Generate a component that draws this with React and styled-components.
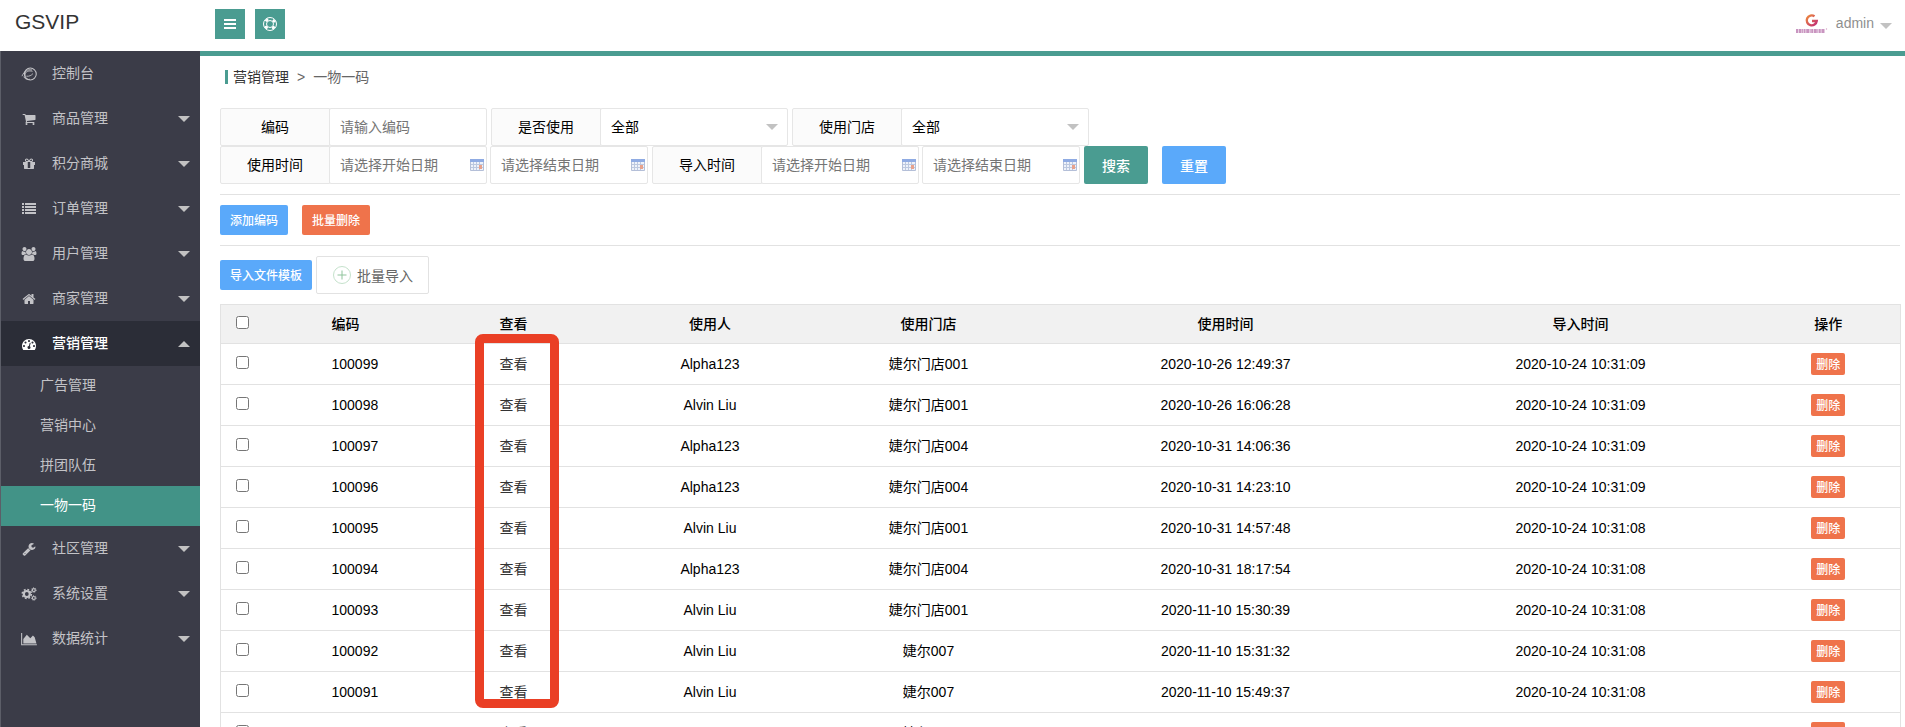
import React, { useState } from 'react';
import styled, { createGlobalStyle, css } from 'styled-components';

const GlobalStyle = createGlobalStyle`
  * {
    box-sizing: border-box;
  }

  body {
    margin: 0;
    background: #fff;
    color: #000;
    font-family: 'Liberation Sans', 'Noto Sans CJK SC', sans-serif;
    font-size: 14px;
    line-height: 24px;
  }

  button, input, select {
    font-family: inherit;
    font-size: 14px;
  }

  a {
    color: #333;
    text-decoration: none;
  }
`;

const Page = styled.div`
  display: grid;
  grid-template-columns: 200px minmax(0, 1fr);
  grid-template-rows: 51px minmax(0, 1fr);
  height: 100vh;
  overflow: hidden;
`;

const Brand = styled.div`
  padding: 10px 15px;
  color: #333;
  font-size: 21px;
`;

const Header = styled.header`
  display: flex;
  justify-content: space-between;
  padding: 9px 13px 0 15px;
`;

const Tools = styled.div`
  display: flex;
  gap: 10px;
`;

const ToolButton = styled.button`
  display: flex;
  align-items: center;
  justify-content: center;
  width: 30px;
  height: 30px;
  padding: 0;
  border: 0;
  background: #4a9c91;
  color: #fff;
  cursor: pointer;
`;

const User = styled.a`
  display: flex;
  align-items: center;
  height: 28px;
  color: #8f8f8f;

  span {
    margin: 0 6px 0 8px;
  }
`;

const Caret = styled.i`
  flex: none;
  border: 6px solid transparent;
  border-top-color: #c2c2c2;
  border-bottom-width: 0;

  ${({ $up }) => $up && css`
    border-top-width: 0;
    border-bottom: 6px solid #c2c2c2;
  `}
`;

const UserCaret = styled(Caret)`
  margin-top: 6px;
`;

const Sidebar = styled.nav`
  border-left: 1px solid #5c5e68;
  background: #3b3c48;
`;

const MenuItem = styled.a`
  display: flex;
  align-items: center;
  height: 45px;
  padding: 0 10px 0 19px;
  background: ${({ $active }) => ($active ? '#2b2d37' : 'transparent')};
  color: ${({ $active }) => ($active ? '#fff' : '#c3c3c7')};
  font-weight: ${({ $active }) => ($active ? 500 : 400)};

  svg {
    width: 18px;
    height: 14px;
  }

  span {
    flex: 1;
    padding: 0 0 2px 14px;
  }
`;

const SubItem = styled.a`
  display: block;
  height: 40px;
  padding-left: 39px;
  background: ${({ $active }) => ($active ? '#429387' : 'transparent')};
  color: ${({ $active }) => ($active ? '#fff' : '#c3c3c7')};
  line-height: 38px;
`;

const Content = styled.main`
  border-top: 5px solid #4a9c91;
  padding: 9px 5px 0 20px;
  overflow: hidden;
`;

const Breadcrumb = styled.div`
  display: flex;
  align-items: center;
  gap: 8px;
  height: 24px;
  margin: 0 0 19px 5px;
  color: #666;

  &::before {
    content: '';
    width: 3px;
    height: 14px;
    margin-right: -3px;
    background: #4a9c91;
  }
`;

const FilterRow = styled.div`
  display: flex;
  gap: 4px;
`;

const Group = styled.div`
  display: flex;
  gap: 3px;
`;

const Field = styled.div`
  display: flex;
`;

const FieldLabel = styled.label`
  width: 110px;
  height: 38px;
  border: 1px solid #e6e6e6;
  border-radius: 2px 0 0 2px;
  background: #fbfbfb;
  line-height: 36px;
  text-align: center;
`;

const control = css`
  height: 38px;
  border: 1px solid #e6e6e6;
  border-radius: 2px;
  padding: 0 10px;
  background: #fff;
  color: #000;
  outline: none;
`;

const Input = styled.input`
  ${control}
  width: 158px;

  ${FieldLabel} + & {
    margin-left: -1px;
  }

  &::placeholder {
    color: #757575;
  }
`;

const DateBox = styled.div`
  display: flex;
  align-items: center;
  width: 158px;
  padding-right: 1px;
  border: 1px solid #e6e6e6;
  border-radius: 2px;

  ${FieldLabel} + & {
    margin-left: -1px;
  }

  input {
    width: 100%;
    min-width: 0;
    height: 36px;
    padding: 0 10px;
    border: 0;
    background: none;
    outline: none;
  }

  input::placeholder {
    color: #757575;
  }

  svg {
    flex: none;
  }
`;

const SelectBox = styled.div`
  display: flex;
  align-items: center;
  width: 188px;
  margin-left: -1px;

  ${Caret} {
    margin-left: -22px;
    pointer-events: none;
  }
`;

const Select = styled.select`
  ${control}
  width: 100%;
  appearance: none;
`;

const SearchActions = styled.div`
  display: flex;
  gap: 14px;
`;

const colors = { teal: '#4a9c91', blue: '#5aa9fa', orange: '#ef734b' };

const sizes = {
  xs: css`
    height: 22px;
    padding: 0 5px 1px;
    font-size: 12px;
  `,
  sm: css`
    height: 30px;
    padding: 0 10px 2px;
    font-size: 12px;
  `,
  md: css`
    height: 38px;
    padding: 0 18px 1px;
  `,
};

const Button = styled.button`
  border: 0;
  border-radius: 2px;
  background: ${({ $color }) => colors[$color]};
  color: #fff;
  font-weight: 500;
  white-space: nowrap;
  cursor: pointer;
  ${({ $size }) => sizes[$size]}
`;

const Actions = styled.div`
  display: flex;
  align-items: center;
  gap: ${({ $gap }) => $gap}px;
  margin-top: 10px;
  padding-top: 10px;
  border-top: 1px solid #e2e2e2;
`;

const UploadButton = styled.button`
  display: flex;
  align-items: center;
  gap: 5px;
  height: 38px;
  padding: 0 15px;
  border: 1px solid #e2e2e2;
  border-radius: 2px;
  background: #fff;
  color: #666;
  cursor: pointer;
`;

const TableWrap = styled.div`
  position: relative;
  margin-top: 10px;
`;

const Table = styled.table`
  width: 100%;
  border: 1px solid #e2e2e2;
  border-collapse: collapse;
  table-layout: fixed;

  tr {
    height: 41px;
    border-bottom: 1px solid #e2e2e2;
  }

  thead tr {
    height: 39px;
    background: #f1f1f1;
  }

  th, td {
    padding: 0 15px 1px;
    text-align: center;
  }

  th {
    font-weight: 500;
  }

  th:nth-child(-n + 3), td:nth-child(-n + 3) {
    text-align: left;
  }
`;

const Checkbox = styled.input`
  display: block;
  width: 13px;
  height: 13px;
  margin: 0 0 3px;
`;

// red frame drawn over the "查看" column
const Highlight = styled.div`
  position: absolute;
  top: 30px;
  left: 255px;
  width: 84px;
  height: 374px;
  border: 9px solid #ea3f25;
  border-radius: 8px;
  pointer-events: none;
`;

const ConsoleIcon = () => (
  <svg viewBox="0 0 18 16" fill="none" stroke="currentColor">
    <circle cx="10.500" cy="8" r="6.800" strokeWidth="1.200" />
    <path d="M1 10.500C3 5 8 2 12.500 3.500M4 8.500c1-3 5-5 9-3.500M6 10.500c3 .5 6-1 7.500-3M3 11c1 2.500 4 4 7 3M4.500 5v7" strokeWidth="1" />
  </svg>
);

const fa = (width, d) => () => (
  <svg viewBox={`0 0 ${width} 1792`} fill="currentColor">
    <path d={d} />
  </svg>
);

const CartIcon = fa(1664, 'M640 1536q0 52-38 90t-90 38-90-38-38-90 38-90 90-38 90 38 38 90zm896 0q0 52-38 90t-90 38-90-38-38-90 38-90 90-38 90 38 38 90zm128-1088v512q0 24-16.500 42.500t-40.500 21.500l-1044 122q13 60 13 70 0 16-24 64h920q26 0 45 19t19 45-19 45-45 19h-1024q-26 0-45-19t-19-45q0-11 8-31.500t16-36 21.500-40 15.500-29.500l-177-823h-204q-26 0-45-19t-19-45 19-45 45-19h256q16 0 28.500 6.500t19.500 15.500 13 24.500 8 26 5.500 29.500 4.500 26h1201q26 0 45 19t19 45z');
const GiftIcon = fa(1536, 'M928 1356v-56-468-192h-320v192 468 56q0 25 18 38.500t46 13.500h192q28 0 46-13.500t18-38.500zm-456-844h195l-126-161q-26-31-69-31-40 0-68 28t-28 68 28 68 68 28zm688-96q0-40-28-68t-68-28q-43 0-69 31l-125 161h194q40 0 68-28t28-68zm376 256v320q0 14-9 23t-23 9h-96v416q0 40-28 68t-68 28h-1088q-40 0-68-28t-28-68v-416h-96q-14 0-23-9t-9-23v-320q0-14 9-23t23-9h440q-93 0-158.500-65.500t-65.500-158.500 65.500-158.500 158.500-65.500q107 0 168 77l128 165 128-165q61-77 168-77 93 0 158.500 65.500t65.500 158.500-65.500 158.500-158.500 65.500h440q14 0 23 9t9 23z');
const ListIcon = fa(1792, 'M256 1312v192q0 13-9.500 22.500t-22.500 9.500h-192q-13 0-22.500-9.500t-9.500-22.500v-192q0-13 9.500-22.500t22.500-9.500h192q13 0 22.500 9.500t9.500 22.500zm0-384v192q0 13-9.500 22.500t-22.500 9.500h-192q-13 0-22.500-9.500t-9.500-22.500v-192q0-13 9.500-22.500t22.500-9.500h192q13 0 22.500 9.500t9.500 22.500zm0-384v192q0 13-9.500 22.500t-22.500 9.500h-192q-13 0-22.500-9.500t-9.500-22.500v-192q0-13 9.500-22.500t22.500-9.500h192q13 0 22.500 9.500t9.500 22.500zm1536 768v192q0 13-9.500 22.500t-22.500 9.500h-1344q-13 0-22.500-9.500t-9.500-22.500v-192q0-13 9.500-22.500t22.500-9.500h1344q13 0 22.500 9.500t9.500 22.500zm-1536-1152v192q0 13-9.500 22.500t-22.500 9.500h-192q-13 0-22.500-9.500t-9.500-22.500v-192q0-13 9.500-22.500t22.500-9.500h192q13 0 22.500 9.500t9.500 22.500zm1536 768v192q0 13-9.500 22.500t-22.500 9.500h-1344q-13 0-22.500-9.500t-9.500-22.500v-192q0-13 9.500-22.500t22.500-9.500h1344q13 0 22.500 9.500t9.500 22.500zm0-384v192q0 13-9.500 22.500t-22.500 9.500h-1344q-13 0-22.500-9.500t-9.500-22.500v-192q0-13 9.500-22.500t22.500-9.500h1344q13 0 22.500 9.500t9.500 22.500zm0-384v192q0 13-9.500 22.500t-22.500 9.500h-1344q-13 0-22.500-9.500t-9.500-22.500v-192q0-13 9.500-22.500t22.500-9.500h1344q13 0 22.500 9.500t9.500 22.500z');
const UsersIcon = fa(1920, 'M593 896q-162 5-265 128h-134q-82 0-138-40.500t-56-118.500q0-353 124-353 6 0 43.500 21t97.500 42.500 119 21.500q67 0 133-23-5 37-5 66 0 159 81 256zm1071 637q0 120-73 189.500t-194 69.500h-874q-121 0-194-69.500t-73-189.500q0-53 3.500-103.500t14-109 26.500-108.500 43-97.500 62-81 85.500-53.500 111.500-20q10 0 43 21.500t73 48 107 48 135 21.500 135-21.500 107-48 73-48 43-21.500q61 0 111.500 20t85.500 53.500 62 81 43 97.500 26.500 108.500 14 109 3.500 103.500zm-1024-1277q0 106-75 181t-181 75-181-75-75-181 75-181 181-75 181 75 75 181zm704 384q0 159-112.500 271.500t-271.500 112.500-271.500-112.500-112.500-271.500 112.500-271.500 271.500-112.500 271.500 112.500 112.500 271.500zm576 225q0 78-56 118.500t-138 40.500h-134q-103-123-265-128 81-97 81-256 0-29-5-66 66 23 133 23 59 0 119-21.500t97.500-42.500 43.500-21q124 0 124 353zm-128-609q0 106-75 181t-181 75-181-75-75-181 75-181 181-75 181 75 75 181z');
const HomeIcon = fa(1664, 'M1408 992v480q0 26-19 45t-45 19h-384v-384h-256v384h-384q-26 0-45-19t-19-45v-480q0-1 .5-3t.5-3l575-474 575 474q1 2 1 6zm223-69l-62 74q-8 9-21 11h-3q-13 0-21-7l-692-577-692 577q-12 8-24 7-13-2-21-11l-62-74q-8-10-7-23.500t11-21.500l719-599q32-26 76-26t76 26l244 204v-195q0-14 9-23t23-9h192q14 0 23 9t9 23v408l219 182q10 8 11 21.500t-7 23.500z');
const DashIcon = fa(1792, 'M384 1152q0-53-37.500-90.500t-90.500-37.500-90.500 37.500-37.500 90.500 37.500 90.500 90.500 37.500 90.500-37.500 37.500-90.500zm192-448q0-53-37.500-90.500t-90.500-37.500-90.500 37.500-37.500 90.500 37.500 90.500 90.500 37.500 90.500-37.500 37.500-90.500zm428 481l101-382q6-26-7.500-48.500t-38.500-29.500-48 6.500-30 39.500l-101 382q-60 5-107 43.500t-63 98.500q-20 77 20 146t117 89 146-20 89-117q16-60-6-117t-72-91zm660-33q0-53-37.500-90.500t-90.500-37.500-90.500 37.500-37.500 90.500 37.500 90.500 90.500 37.500 90.500-37.500 37.500-90.500zm-640-640q0-53-37.500-90.500t-90.500-37.500-90.500 37.500-37.500 90.500 37.500 90.500 90.500 37.500 90.500-37.500 37.500-90.500zm448 192q0-53-37.500-90.500t-90.500-37.500-90.500 37.500-37.500 90.500 37.500 90.500 90.500 37.500 90.500-37.500 37.500-90.500zm320 448q0 261-141 483-19 29-54 29h-1402q-35 0-54-29-141-221-141-483 0-182 71-348t191-286 286-191 348-71 348 71 286 191 191 286 71 348z');
const WrenchIcon = fa(1664, 'M384 1472q0-26-19-45t-45-19-45 19-19 45 19 45 45 19 45-19 19-45zm644-420l-682 682q-37 37-90 37-52 0-91-37l-106-108q-38-36-38-90 0-53 38-91l681-681q39 98 114.500 173.500t173.500 114.500zm634-435q0 39-23 106-47 134-164.500 217.500t-258.500 83.500q-185 0-316.500-131.500t-131.500-316.500 131.500-316.500 316.500-131.500q58 0 121.500 16.500t107.500 46.500q16 11 16 28t-16 28l-293 169v224l193 107q5-3 79-48.500t135.500-81 70.500-35.500q15 0 23.500 10t8.500 25z');
const CogsIcon = () => (
  <svg viewBox="0 0 18 16" fill="none" stroke="currentColor">
    <circle cx="6.500" cy="8" r="3.400" strokeWidth="2.500" />
    <circle cx="6.500" cy="8" r="5.200" strokeWidth="1.800" strokeDasharray="2.050 2.030" />
    <circle cx="14.500" cy="3.500" r="1.700" strokeWidth="1.300" />
    <circle cx="14.500" cy="3.500" r="2.700" strokeWidth="1" strokeDasharray="1.060 1.060" />
    <circle cx="14.500" cy="12.500" r="1.700" strokeWidth="1.300" />
    <circle cx="14.500" cy="12.500" r="2.700" strokeWidth="1" strokeDasharray="1.060 1.060" />
  </svg>
);
const ChartIcon = () => (
  <svg viewBox="0 0 18 16" fill="currentColor">
    <path d="M0 1h1.200v13H18v1.200H0zM2.500 13V8l4-5 4 4 3-3 2 2 2 7z" />
  </svg>
);

const BarsIcon = () => (
  <svg width="12" height="12" viewBox="0 0 12 12" fill="currentColor">
    <path d="M0 1h12v2H0zM0 5h12v2H0zM0 9h12v2H0z" />
  </svg>
);

const RingIcon = () => (
  <svg width="14" height="14" viewBox="0 0 14 14" fill="none" stroke="currentColor">
    <circle cx="7" cy="7" r="6.500" />
    <circle cx="7" cy="7" r="3.500" />
    <circle cx="7" cy="7" r="5" strokeWidth="2.500" strokeDasharray="3 4.854" strokeDashoffset="-2.427" />
  </svg>
);

const CalendarIcon = () => (
  <svg width="16" height="16" viewBox="0 0 16 16">
    <path d="M1.500 2.500h13v11h-13z" fill="#eef2fa" stroke="#b4bfd8" />
    <path d="M1 2h14v3H1z" fill="#8fabe3" />
    <path d="M2 7.500h12M2 10.500h12M4.500 5v8M7.500 5v8M10.500 5v8" stroke="#bcc8df" />
    <path d="M10 8h3v4h-3z" fill="#e8a28c" />
  </svg>
);

const PlusIcon = () => (
  <svg width="20" height="20" viewBox="0 0 20 20" fill="none">
    <circle cx="10" cy="10" r="8.500" stroke="#c5e2cc" />
    <path d="M5.500 10h9M10 5.500v9" stroke="#8fc49c" />
  </svg>
);

const Logo = () => (
  <svg width="33" height="24" viewBox="0 0 33 24">
    <defs>
      <linearGradient id="logo-fill" x1="0" y1="0" x2="1" y2="1">
        <stop offset="0" stopColor="#ee8a3c" />
        <stop offset="1" stopColor="#c02d76" />
      </linearGradient>
    </defs>
    <path d="M19.500 5.200A5 5 0 1 0 21.700 10H17" fill="none" stroke="url(#logo-fill)" strokeWidth="2.400" />
    <path d="M1 20h29" stroke="#c995c0" strokeWidth="4" strokeDasharray="2 .6 3 .5 1 .5" />
    <circle cx="31.500" cy="18" r=".7" fill="#d8a5c8" />
  </svg>
);

const menu = [
  { name: '控制台', icon: ConsoleIcon, single: true },
  { name: '商品管理', icon: CartIcon },
  { name: '积分商城', icon: GiftIcon },
  { name: '订单管理', icon: ListIcon },
  { name: '用户管理', icon: UsersIcon },
  { name: '商家管理', icon: HomeIcon },
  { name: '营销管理', icon: DashIcon, children: ['广告管理', '营销中心', '拼团队伍', '一物一码'] },
  { name: '社区管理', icon: WrenchIcon },
  { name: '系统设置', icon: CogsIcon },
  { name: '数据统计', icon: ChartIcon },
];

const rows = [
  ['100099', 'Alpha123', '婕尔门店001', '2020-10-26 12:49:37', '2020-10-24 10:31:09'],
  ['100098', 'Alvin Liu', '婕尔门店001', '2020-10-26 16:06:28', '2020-10-24 10:31:09'],
  ['100097', 'Alpha123', '婕尔门店004', '2020-10-31 14:06:36', '2020-10-24 10:31:09'],
  ['100096', 'Alpha123', '婕尔门店004', '2020-10-31 14:23:10', '2020-10-24 10:31:09'],
  ['100095', 'Alvin Liu', '婕尔门店001', '2020-10-31 14:57:48', '2020-10-24 10:31:08'],
  ['100094', 'Alpha123', '婕尔门店004', '2020-10-31 18:17:54', '2020-10-24 10:31:08'],
  ['100093', 'Alvin Liu', '婕尔门店001', '2020-11-10 15:30:39', '2020-10-24 10:31:08'],
  ['100092', 'Alvin Liu', '婕尔007', '2020-11-10 15:31:32', '2020-10-24 10:31:08'],
  ['100091', 'Alvin Liu', '婕尔007', '2020-11-10 15:49:37', '2020-10-24 10:31:08'],
  ['100090', 'Alvin Liu', '婕尔007', '2020-11-10 15:52:16', '2020-10-24 10:31:08'],
];

const columns = [96, 168, 125, 201, 236, 358, 352, 144];

const SelectField = ({ id, label }) => (
  <Field>
    <FieldLabel htmlFor={id}>{label}</FieldLabel>
    <SelectBox>
      <Select id={id}>
        <option>全部</option>
      </Select>
      <Caret />
    </SelectBox>
  </Field>
);

const DateInput = ({ id, placeholder }) => (
  <DateBox>
    <input id={id} type="text" placeholder={placeholder} aria-label={placeholder} />
    <CalendarIcon />
  </DateBox>
);

const DateRange = ({ id, label }) => (
  <Group>
    <Field>
      <FieldLabel htmlFor={id}>{label}</FieldLabel>
      <DateInput id={id} placeholder="请选择开始日期" />
    </Field>
    <DateInput placeholder="请选择结束日期" />
  </Group>
);

const App = () => {
  const [selected, setSelected] = useState([]);

  const toggle = (code) => {
    setSelected(selected.includes(code) ? selected.filter((c) => c !== code) : [...selected, code]);
  };

  const toggleAll = () => {
    setSelected(selected.length === rows.length ? [] : rows.map(([code]) => code));
  };

  return (
    <Page>
      <GlobalStyle />
      <Brand>GSVIP</Brand>
      <Header>
        <Tools>
          <ToolButton aria-label="菜单"><BarsIcon /></ToolButton>
          <ToolButton aria-label="帮助"><RingIcon /></ToolButton>
        </Tools>
        <User href="#">
          <Logo />
          <span>admin</span>
          <UserCaret />
        </User>
      </Header>

      <Sidebar>
        {menu.map(({ name, icon: Icon, single, children }) => (
          <React.Fragment key={name}>
            <MenuItem href="#" $active={!!children}>
              <Icon />
              <span>{name}</span>
              {!single && <Caret $up={!!children} />}
            </MenuItem>
            {children && children.map((child) => (
              <SubItem key={child} href="#" $active={child === '一物一码'}>{child}</SubItem>
            ))}
          </React.Fragment>
        ))}
      </Sidebar>

      <Content>
        <Breadcrumb>
          <a href="#">营销管理</a>
          <span>&gt;</span>
          <span>一物一码</span>
        </Breadcrumb>

        <FilterRow>
          <Field>
            <FieldLabel htmlFor="code">编码</FieldLabel>
            <Input id="code" type="text" placeholder="请输入编码" />
          </Field>
          <SelectField id="used" label="是否使用" />
          <SelectField id="store" label="使用门店" />
        </FilterRow>
        <FilterRow>
          <DateRange id="use-time" label="使用时间" />
          <DateRange id="import-time" label="导入时间" />
          <SearchActions>
            <Button $color="teal" $size="md">搜索</Button>
            <Button $color="blue" $size="md">重置</Button>
          </SearchActions>
        </FilterRow>

        <Actions $gap={14}>
          <Button $color="blue" $size="sm">添加编码</Button>
          <Button $color="orange" $size="sm">批量删除</Button>
        </Actions>
        <Actions $gap={4}>
          <Button $color="blue" $size="sm">导入文件模板</Button>
          <UploadButton>
            <PlusIcon />
            批量导入
          </UploadButton>
        </Actions>

        <TableWrap>
          <Table>
            <colgroup>
              {columns.map((width, i) => <col key={i} width={width} />)}
            </colgroup>
            <thead>
              <tr>
                <th>
                  <Checkbox
                    type="checkbox"
                    aria-label="全选"
                    checked={selected.length === rows.length}
                    onChange={toggleAll}
                  />
                </th>
                <th>编码</th>
                <th>查看</th>
                <th>使用人</th>
                <th>使用门店</th>
                <th>使用时间</th>
                <th>导入时间</th>
                <th>操作</th>
              </tr>
            </thead>
            <tbody>
              {rows.map(([code, user, store, usedAt, importedAt]) => (
                <tr key={code}>
                  <td>
                    <Checkbox
                      type="checkbox"
                      aria-label={code}
                      checked={selected.includes(code)}
                      onChange={() => toggle(code)}
                    />
                  </td>
                  <td>{code}</td>
                  <td><a href="#">查看</a></td>
                  <td>{user}</td>
                  <td>{store}</td>
                  <td>{usedAt}</td>
                  <td>{importedAt}</td>
                  <td><Button $color="orange" $size="xs">删除</Button></td>
                </tr>
              ))}
            </tbody>
          </Table>
          <Highlight />
        </TableWrap>
      </Content>
    </Page>
  );
};

export default App;
